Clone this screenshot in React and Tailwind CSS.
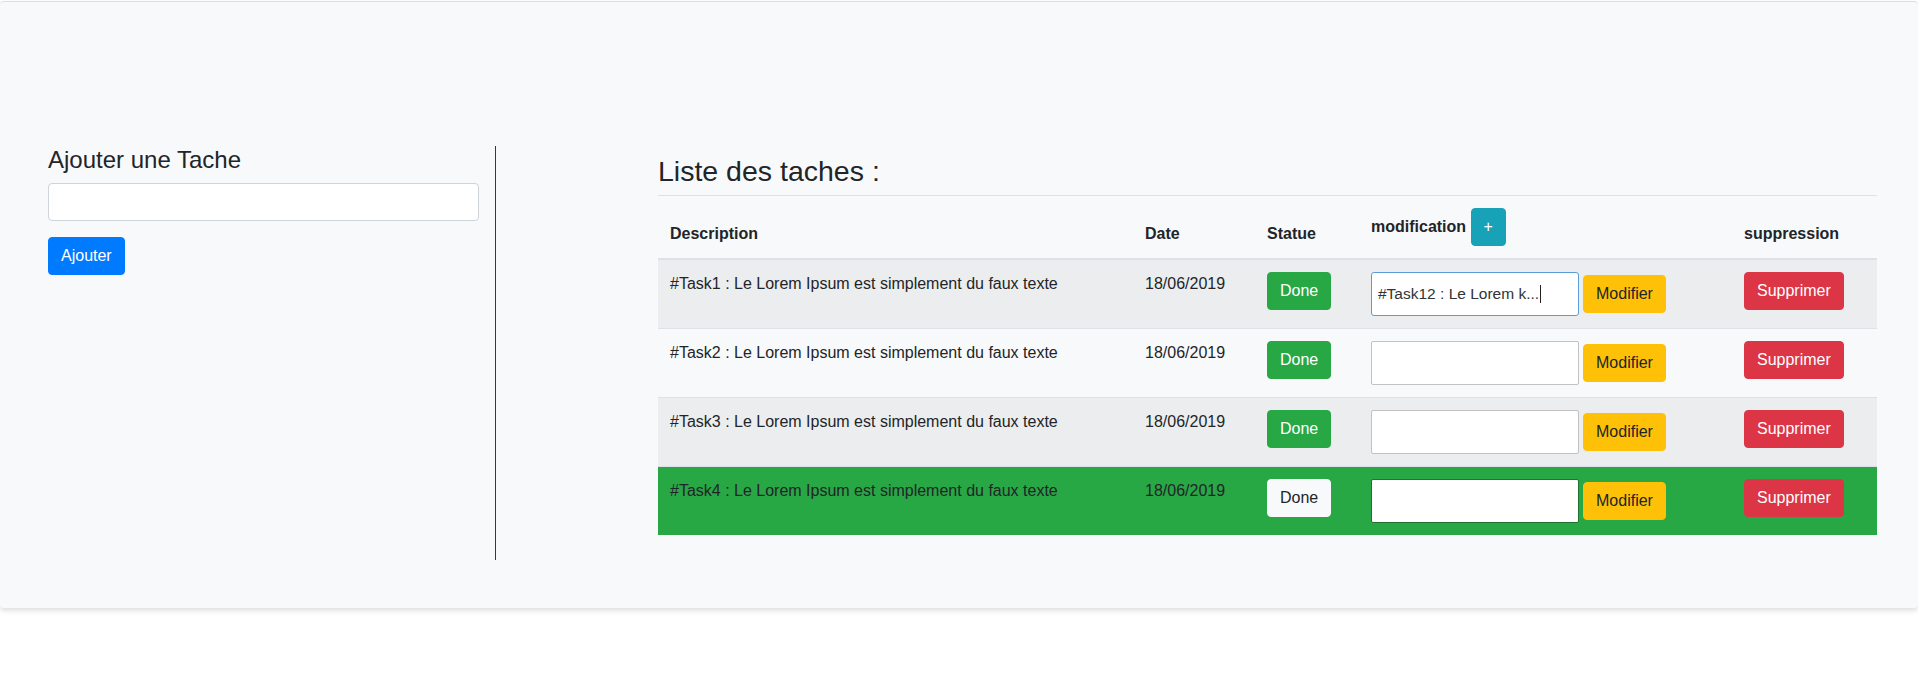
import React from "react";

const tasks = [
  { id: 1, date: "18/06/2019", done: false, editing: true },
  { id: 2, date: "18/06/2019", done: false },
  { id: 3, date: "18/06/2019", done: false },
  { id: 4, date: "18/06/2019", done: true },
];

const COLS = "grid grid-cols-[475px_122px_104px_373px_145px]";

function Row({ t, index }) {
  const striped = index % 2 === 0;
  const rowBg = t.done ? "bg-[#28a745]" : striped ? "bg-[#ecedee]" : "bg-transparent";
  const border = index === 0 ? "" : "border-t border-[#dee2e6]";
  return (
    <div className={`${COLS} ${rowBg} ${border}`}>
      <div className="p-3 text-[16px] leading-6 text-[#212529]">
        #Task{t.id} : Le Lorem Ipsum est simplement du faux texte
      </div>
      <div className="p-3 text-[16px] leading-6 text-[#212529]">{t.date}</div>
      <div className="p-3">
        {t.done ? (
          <button className="h-[38px] px-3 border border-[#f8f9fa] bg-[#f8f9fa] text-[#212529] rounded text-[16px] leading-6">
            Done
          </button>
        ) : (
          <button className="h-[38px] px-3 border border-[#28a745] bg-[#28a745] text-white rounded text-[16px] leading-6">
            Done
          </button>
        )}
      </div>
      <div className="p-3 flex items-center gap-[4px]">
        {t.editing ? (
          <div className="h-[44px] w-[208px] bg-white border border-[#5b9dd9] rounded-[3px] pl-[6px] flex items-center text-[15.5px] text-[#333] whitespace-nowrap">
            <span>#Task12 : Le Lorem k...</span>
            <span className="inline-block w-px h-[18px] bg-[#222] ml-[1px]" />
          </div>
        ) : (
          <div
            className={`h-[44px] w-[208px] bg-white border rounded-[2px] ${
              t.done ? "border-[#1c7430]" : "border-[#c2c2c2]"
            }`}
          />
        )}
        <button className="h-[38px] px-3 border border-[#ffc107] bg-[#ffc107] text-[#212529] rounded text-[16px] leading-6">
          Modifier
        </button>
      </div>
      <div className="p-3">
        <button className="h-[38px] px-3 border border-[#dc3545] bg-[#dc3545] text-white rounded text-[16px] leading-6">
          Supprimer
        </button>
      </div>
    </div>
  );
}

export default function App() {
  return (
    <div className="min-h-screen bg-white font-['Liberation_Sans',Arial,sans-serif] text-[#212529]">
      <div className="mt-px bg-[#f8f9fa] border-t border-[#dcdee1] rounded shadow-[0_3px_5px_rgba(0,0,0,0.12)] pt-[144px] pb-[48px] px-[33px]">
        <div className="flex">
          <div className="w-[463px] h-[414px] pl-[15px] pr-[16px] border-r border-[#343a40]">
            <h4 className="text-[24px] leading-[28.8px] font-normal mb-2">Ajouter une Tache</h4>
            <input
              type="text"
              className="block w-full h-[38px] bg-white border border-[#ced4da] rounded mb-4 px-3 outline-none"
            />
            <button className="h-[38px] px-3 border border-[#007bff] bg-[#007bff] text-white rounded text-[16px] leading-6">
              Ajouter
            </button>
          </div>
          <div className="ml-[162px] w-[1219px] pt-[9px]">
            <h3 className="text-[28.5px] leading-[33.6px] font-normal mb-[6px]">Liste des taches :</h3>
            <div className="border-t border-[#dee2e6]">
              <div className={`${COLS} border-b-2 border-[#dee2e6] font-bold text-[16px] leading-6`}>
                <div className="p-3 self-end">Description</div>
                <div className="p-3 self-end">Date</div>
                <div className="p-3 self-end">Statue</div>
                <div className="p-3 self-end">
                  modification{" "}
                  <button className="inline-block h-[38px] px-3 border border-[#17a2b8] bg-[#17a2b8] text-white rounded font-normal align-baseline">
                    +
                  </button>
                </div>
                <div className="p-3 self-end">suppression</div>
              </div>
              {tasks.map((t, i) => (
                <Row key={t.id} t={t} index={i} />
              ))}
            </div>
          </div>
        </div>
      </div>
    </div>
  );
}
